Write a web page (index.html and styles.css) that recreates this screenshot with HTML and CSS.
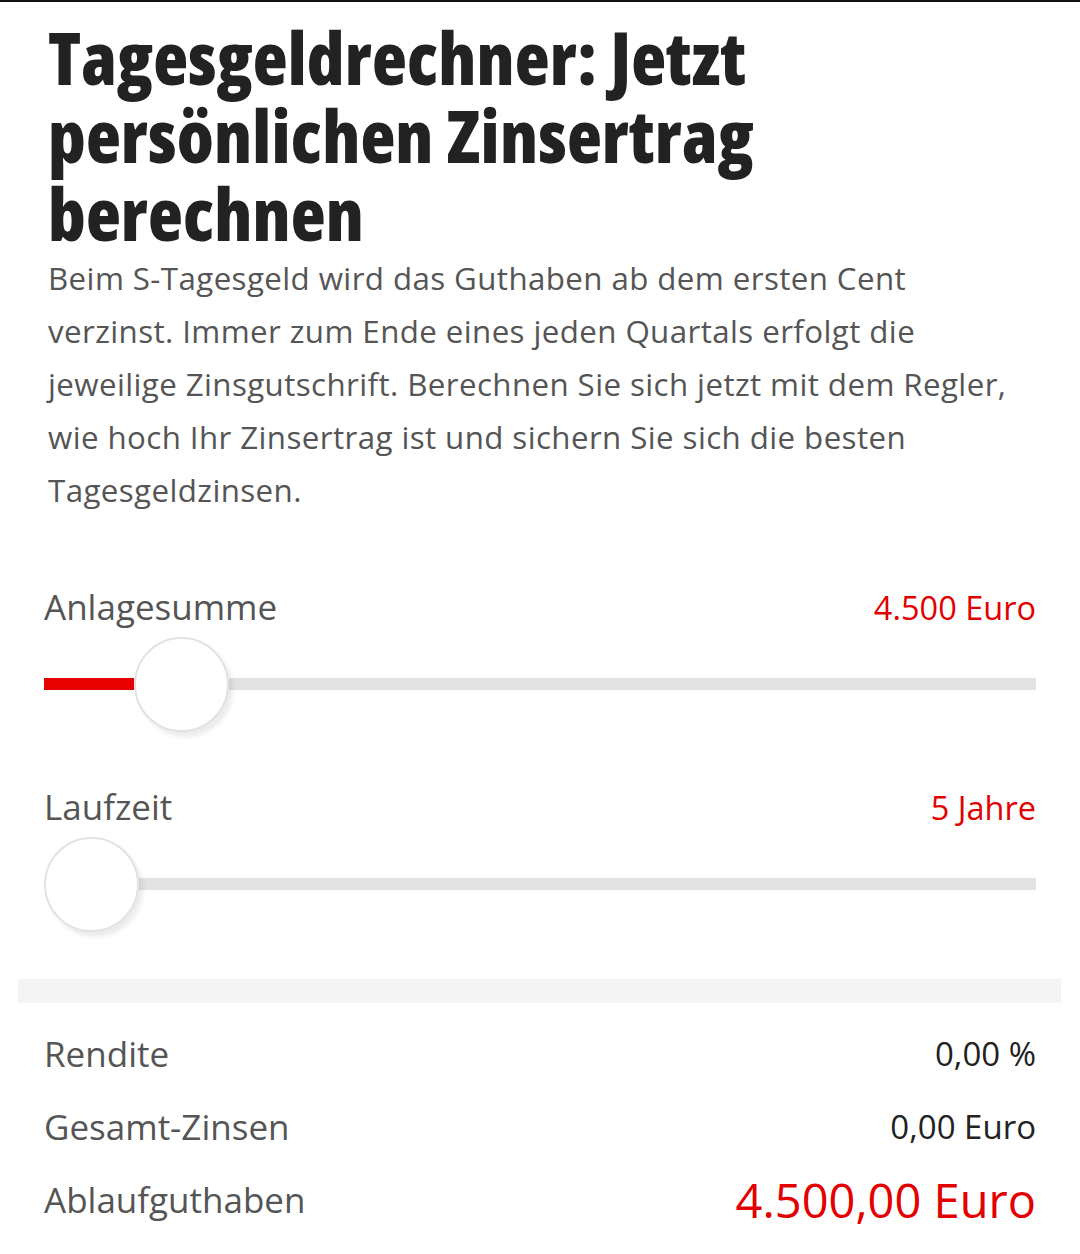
FILE: index.html
```html
<!DOCTYPE html>
<html lang="de">
<head>
<meta charset="utf-8">
<title>Tagesgeldrechner</title>
<link rel="stylesheet" href="styles.css">
</head>
<body>
<div class="topline"></div>
<main class="page">
  <h1 class="title">Tagesgeldrechner: Jetzt persönlichen Zinsertrag berechnen</h1>
  <p class="intro">Beim S-Tagesgeld wird das Guthaben ab dem ersten Cent verzinst. Immer zum Ende eines jeden Quartals erfolgt die jeweilige Zinsgutschrift. Berechnen Sie sich jetzt mit dem Regler, wie hoch Ihr Zinsertrag ist und sichern Sie sich die besten Tagesgeldzinsen.</p>

  <section class="field field-first">
    <div class="field-head">
      <span class="label">Anlagesumme</span>
      <span class="value">4.500 Euro</span>
    </div>
    <div class="slider">
      <div class="fill" style="width: 90px"></div>
      <div class="thumb"></div>
      <div class="track"></div>
    </div>
  </section>

  <section class="field">
    <div class="field-head">
      <span class="label">Laufzeit</span>
      <span class="value">5 Jahre</span>
    </div>
    <div class="slider">
      <div class="thumb"></div>
      <div class="track"></div>
    </div>
  </section>
</main>
<div class="divider"></div>
<section class="results">
  <div class="row"><span class="label">Rendite</span><span class="res">0,00 %</span></div>
  <div class="row"><span class="label">Gesamt-Zinsen</span><span class="res">0,00 Euro</span></div>
  <div class="row"><span class="label">Ablaufguthaben</span><span class="res total">4.500,00 Euro</span></div>
</section>
</body>
</html>
```

FILE: styles.css
```css
html, body {
  margin: 0;
  padding: 0;
  background: #fff;
}
body {
  font-family: "Open Sans", "Noto Sans", sans-serif;
  color: #555;
}
.topline {
  height: 2px;
  background: #111;
}
.page {
  padding: 0 44px 0 44px;
}
.title {
  margin: 16px 0 0 4px;
  font-family: "Open Sans", "DejaVu Sans Condensed", sans-serif;
  font-stretch: 80%;
  font-weight: 800;
  font-size: 72px;
  line-height: 78px;
  letter-spacing: 0.2px;
  color: #222;
  max-width: 800px;
}
.intro {
  margin: 0 0 0 4px;
  max-width: 975px;
  font-size: 31.3px;
  letter-spacing: 0.4px;
  line-height: 53px;
  color: #555;
}
.field-first {
  margin-top: 66px;
}
.field + .field {
  margin-top: 51px;
}
.field-head {
  display: flex;
  justify-content: space-between;
  align-items: baseline;
}
.label {
  font-size: 35px;
  color: #555;
}
.value {
  font-size: 32.5px;
  color: #e30000;
}
.slider {
  display: flex;
  align-items: center;
  height: 96px;
  margin-top: 6px;
}
.fill {
  height: 12px;
  background: #e60000;
  flex: none;
}
.thumb {
  flex: none;
  width: 95px;
  height: 95px;
  border-radius: 50%;
  background: #fff;
  border: 2px solid #e2e2e2;
  box-shadow: 4px 5px 4px rgba(0,0,0,0.08);
  box-sizing: border-box;
  z-index: 1;
}
.track {
  flex: 1;
  height: 12px;
  background: #e3e3e3;
}
.divider {
  margin: 47px 19px 0 18px;
  height: 24px;
  background: #f4f4f4;
}
.results {
  padding: 14px 44px 0 44px;
}
.row {
  display: flex;
  justify-content: space-between;
  align-items: center;
  height: 73px;
}
.res {
  font-size: 33px;
  color: #222;
}
.res.total {
  font-size: 47px;
  color: #e30000;
}
```
